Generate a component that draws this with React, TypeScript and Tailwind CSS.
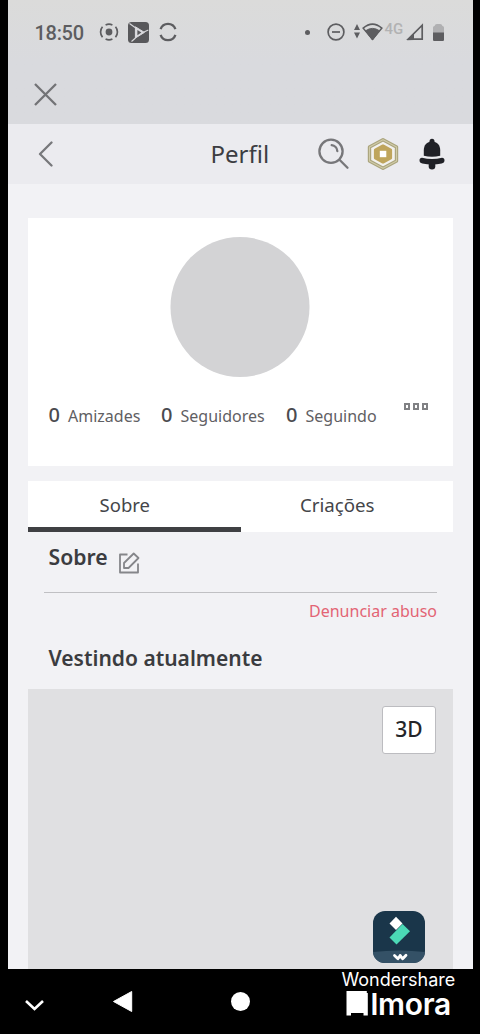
import React from 'react';
import clsx from 'clsx';

interface Stat {
  label: string;
  value: number;
  className: string;
}

const stats: Stat[] = [
  { label: 'Amizades', value: 0, className: 'w-[112.5px]' },
  { label: 'Seguidores', value: 0, className: 'w-[125px]' },
  { label: 'Seguindo', value: 0, className: 'w-[100px]' },
];

const StatusBar: React.FC = () => (
  <div className="flex h-16 items-center pl-[27px] pr-[29px] text-[#5d5d60]">
    <span className="w-[64px] pt-px font-['Roboto'] text-[20px] font-medium leading-none tracking-[-0.3px]">18:50</span>
    <svg className="h-5 w-5" viewBox="0 0 20 20" fill="none" stroke="currentColor" strokeWidth="1.7">
      <circle cx="10" cy="10" r="3.4" fill="currentColor" stroke="none" />
      <path d="M6.6 2.9a8 8 0 0 1 6.8 0M6.6 17.1a8 8 0 0 0 6.8 0M3.5 4.8a8 8 0 0 0 0 10.4M16.5 4.8a8 8 0 0 1 0 10.4" />
    </svg>
    <svg className="ml-[9px] h-[21px] w-[21px]" viewBox="0 0 21 21">
      <rect width="21" height="21" rx="3.5" fill="#58585b" />
      <path d="M1.5 1.5 7 5.5M15.5 10.2l4.8-2.2M7.5 16l-4 3.5" fill="none" stroke="#dadade" strokeWidth="1.1" />
      <path d="M7.4 4.8 16.4 10.4 7.4 16z" fill="#dadade" stroke="#dadade" strokeWidth="1" strokeLinejoin="round" />
      <path d="M9.4 8v5.200l4-2.700z" fill="#58585b" />
    </svg>
    <svg className="ml-[10px] h-5 w-[18px]" viewBox="0 0 18 20" fill="none" stroke="currentColor" strokeWidth="2.3">
      <path d="M1.6 7.2a7.8 7.8 0 0 1 14.8 0M1.6 12.8a7.8 7.8 0 0 0 14.8 0" />
    </svg>

    <div className="ml-auto flex items-center">
      <span className="mr-[18.5px] h-[5px] w-[5px] rounded-full bg-[#5d5d60]" />
      <svg className="-ml-[1.5px] h-[18px] w-[18px]" viewBox="0 0 18 18" fill="none" stroke="currentColor" strokeWidth="1.7">
        <circle cx="9" cy="9" r="7.9" />
        <path d="M5 9h8" />
      </svg>
      <svg className="ml-[9px] h-[15px] w-[6px] -translate-y-px" viewBox="0 0 6 15" fill="currentColor">
        <path d="M3 0l3 6H0zM3 14.5l3-6H0z" />
      </svg>
      <svg className="ml-[2px] h-[18px] w-[21px]" viewBox="0 0 21 18">
        <path d="M1.200 5.200Q10.500-2.800 19.800 5.200L10.500 16.300z" fill="none" stroke="currentColor" strokeWidth="1.6" />
        <path d="M3.5 7.8Q10.5 3 17.5 7.8L10.5 17z" fill="currentColor" stroke="currentColor" strokeWidth="1" />
      </svg>
      <span className="ml-[2px] -mt-1.5 w-[20.5px] font-['Roboto'] text-[15px] font-medium leading-none text-[#b2b2b3]">4G</span>
      <svg className="ml-[1px] h-[18px] w-[18px]" viewBox="0 0 18 18">
        <path d="M16.2 2.2v14H2.2z" fill="none" stroke="currentColor" strokeWidth="1.7" />
        <path d="M1 17.2 8 10v7z" fill="currentColor" />
      </svg>
      <svg className="ml-[9px] h-[17px] w-[11px]" viewBox="0 0 11 17">
        <path d="M0 9V3.500A1.500 1.500 0 0 1 1.500 2Q2 0 4 0h3Q9 0 9.500 2A1.500 1.500 0 0 1 11 3.500V9z" fill="#b0b0b2" />
        <path d="M0 8.5h11v7A1.3 1.3 0 0 1 9.7 17H1.3A1.3 1.3 0 0 1 0 15.5z" fill="currentColor" />
      </svg>
    </div>
  </div>
);

const Header: React.FC = () => (
  <div className="flex h-[60px] items-center bg-[#ebebef] pl-[29px] pr-[28px]">
    <svg className="h-7 w-4" viewBox="0 0 16 28" fill="none" stroke="#77787b" strokeWidth="2.3" strokeLinecap="round" strokeLinejoin="round">
      <path d="M14.5 2.5 3 14l11.5 11.5" />
    </svg>
    <h1 className="ml-[158px] text-[24px] leading-none text-[#3c3d42]">Perfil</h1>
    <svg className="ml-auto h-8 w-8" viewBox="0 0 32 32" fill="none" stroke="#77777a" strokeWidth="2.3" strokeLinecap="round">
      <circle cx="13" cy="13.3" r="11.6" />
      <path d="m21.5 21.8 8 8M13.700 7.200a6.300 6.300 0 0 1 5.600 5.800" />
    </svg>
    <svg className="ml-[15.5px] h-[34px] w-[34px]" viewBox="0 0 34 34" strokeLinejoin="round">
      <path d="M17 2.800 30.500 9.900v14.200L17 31.200 3.500 24.100V9.900z" fill="#f2f1ee" stroke="#aaa47d" strokeWidth="3.4" />
      <path d="M17 2.800 30.500 9.900v14.200L17 31.200 3.500 24.100V9.900z" fill="none" stroke="#d0cba8" strokeWidth="1.1" />
      <path d="M17 8.800 24.700 13v8L17 25.200 9.300 21v-8z" fill="#bfa55c" stroke="#bfa55c" strokeWidth="2.8" />
      <path d="M13.800 13.800h6.500v6.400h-6.500z" fill="#fff" />
    </svg>
    <svg className="ml-[19.5px] h-8 w-[26px]" viewBox="0 0 26 32" fill="#202127">
      <circle cx="13" cy="3.2" r="2.5" />
      <path d="M13 3.5c-5.2 0-8.2 3.5-8.2 8.8v5.400Q13 20 21.200 17.700v-5.400C21.200 7 18.200 3.500 13 3.500z" />
      <path d="M3 19.800Q13 22.200 23 19.800c1.600 0 2.500 1 2.500 2.500 0 1.800-1 2.800-2.800 3.200-6.300 1.400-13 1.400-19.400 0C1.500 25.100.5 24.100.5 22.300c0-1.500.9-2.500 2.500-2.500z" />
      <path d="M9.700 26h6.600v2.600a3.300 3 0 0 1-6.600 0z" />
    </svg>
  </div>
);

const ProfileCard: React.FC = () => (
  <section className="mt-[33.5px] h-[248px] bg-white pt-[19.5px]">
    <div className="mx-auto h-[139.5px] w-[139.5px] -translate-x-[0.5px] rounded-full bg-[#d3d3d5]" />
    <div className="flex pl-[20.5px] pt-[23px]">
      {stats.map((stat) => (
        <div key={stat.label} className={clsx('flex h-[30px] shrink-0 items-baseline', stat.className)}>
          <span className="w-[19.5px] text-[20px] font-medium leading-[30px] text-[#4a4b4f]">{stat.value}</span>
          <span className="text-[16px] leading-[30px] text-[#5f6063]">{stat.label}</span>
        </div>
      ))}
      <div className="ml-[17.5px] mt-[3.5px] flex gap-[2.5px]">
        {[0, 1, 2].map((dot) => (
          <span key={dot} className="h-[6.5px] w-[6.5px] border-2 border-[#808184]" />
        ))}
      </div>
    </div>
  </section>
);

const FilmoraIcon: React.FC = () => (
  <svg className="absolute bottom-[5px] left-[343.5px] h-[54px] w-[54px]" viewBox="0 0 54 54">
    <rect x="1" y="1" width="52" height="52" rx="12" fill="#1a364a" />
    <path d="M1 42Q27 39 53 42A12 11 0 0 1 41 53H13A12 11 0 0 1 1 42z" fill="#345166" />
    <path d="m24 6.8 6.5 6.7-6.5 6.5-6.5-6.5z" fill="#fff" />
    <path d="m30.500 14 7.500 7.200L24.500 34.500l-7-7z" fill="#4bd9b6" />
    <path d="m22.500 45.500 3.400 3.200 2.300-2.700 2.500 2.700 3.300-3.500" fill="none" stroke="#fff" strokeWidth="2.8" strokeLinecap="round" strokeLinejoin="round" />
    <circle cx="28.2" cy="45.5" r="1.5" fill="#fff" />
  </svg>
);

const NavigationBar: React.FC = () => (
  <div className="flex h-[66px] items-start pl-[24px]">
    <svg className="mt-[29.5px] h-[14px] w-[21px]" viewBox="0 0 21 14" fill="none" stroke="#fff" strokeWidth="2.6">
      <path d="m2 3 8.5 8L19 3" />
    </svg>
    <svg className="ml-[67px] mt-[21px] h-[23px] w-[21px]" viewBox="0 0 21 23" fill="#fff" stroke="#fff" strokeLinejoin="round">
      <path d="M19.700 1.500v20L1.500 11.500z" />
    </svg>
    <div className="ml-[97.5px] mt-[23px] h-[19px] w-[19px] rounded-full bg-white" />
    <div className="ml-[92px] font-['Inter'] text-white">
      <div className="text-[18px] leading-[22px]">Wondershare</div>
      <div className="flex pl-[4px]">
        <svg className="h-[25px] w-[23px]" viewBox="0 0 23 25" fill="#fff">
          <path d="M.5 0h20.300v2h1v22.500h-4.300V22H5v2.500H.5z" />
        </svg>
        <span className="ml-[2px] text-[30px] font-semibold leading-[27px] tracking-[-0.3px]">lmora</span>
      </div>
    </div>
  </div>
);

export default function App() {
  return (
    <div className="h-[1034px] w-[480px] overflow-hidden bg-black font-['Noto_Sans',sans-serif]">
      <div className="ml-[7.5px] h-[968.5px] w-[465.5px] overflow-hidden bg-[#f2f2f5]">
        <div className="h-[124px] bg-linear-to-b from-[#dbdbda] to-[#d9dade] to-50%">
          <StatusBar />
          <svg className="ml-[26.5px] mt-[18.5px] h-[23px] w-[23px]" viewBox="0 0 23 23" fill="none" stroke="#727376" strokeWidth="2.3">
            <path d="m1 1 21 21M22 1 1 22" />
          </svg>
        </div>
        <Header />

        <main className="ml-[20.5px] w-[425px]">
          <ProfileCard />

          <div className="mt-[15px] flex h-[51px] bg-white text-[18.5px] leading-[28px] text-[#444549]">
            <button className="w-1/2 border-b-[5.5px] border-[#3f4043] pr-[19px] pt-[2px]">Sobre</button>
            <button className="w-1/2 pb-[2px] pr-[19px] text-[18.7px]">Criações</button>
          </div>

          <section className="mx-[16px]">
            <div className="flex h-[61.5px] border-b-[1.5px] border-[#c0c0c3] pl-[4.5px]">
              <h2 className="mt-[10px] text-[21.2px] font-semibold leading-[30px] text-[#3b3c40]">Sobre</h2>
              <svg className="ml-[10px] mt-[19px] h-[23px] w-[22px]" viewBox="0 0 22 23" fill="none" stroke="#85868a" strokeWidth="1.8" strokeLinejoin="round">
                <path d="M9.5 3.5H2v18h18v-9" />
                <path d="M6 17v-5l9.700-9.500L20.500 7l-10 10z" />
              </svg>
            </div>
            <div className="flex h-[34px] justify-end pt-[4px]">
              <a className="text-[16px] leading-[28px] text-[#e36474]">Denunciar abuso</a>
            </div>
            <h2 className="ml-[4.5px] mt-[16px] text-[21px] font-semibold leading-[30px] text-[#3b3c40]">Vestindo atualmente</h2>
          </section>

          <div className="relative mt-[15.5px] h-[280px] bg-[#e0e0e2] pl-[354px] pt-[17px]">
            <button className="h-[48px] w-[54px] rounded-[3px] border border-[#bcbcc0] bg-white text-[21px] font-medium text-[#242529]">3D</button>
            <FilmoraIcon />
          </div>
        </main>
      </div>
      <NavigationBar />
    </div>
  );
}
